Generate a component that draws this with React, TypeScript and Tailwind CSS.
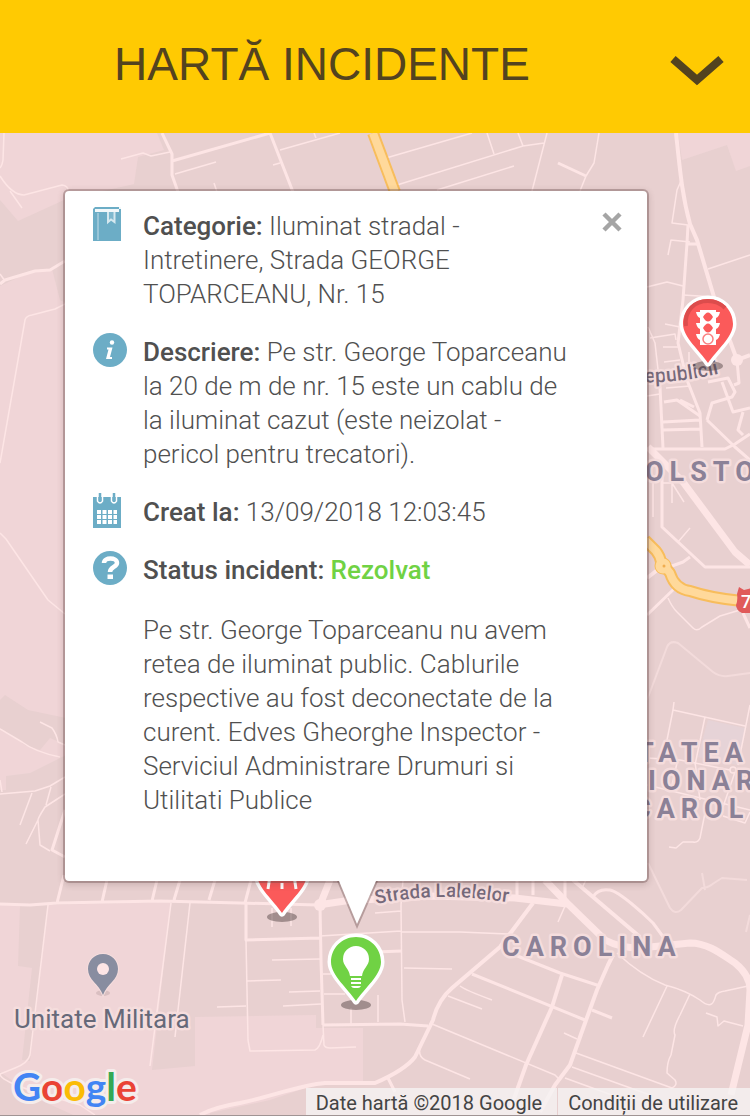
import React, { type ReactNode } from "react";

type MarkerKind = "bulb" | "traffic" | "road";

const LIGHT_AREAS = [
  "M0 133H157L164 150L138 157L134 184L64 200L18 221L0 200Z",
  "M678 133L682 160L727 145L736 171L750 166V133Z",
  "M0 286L30 272L52 269L60 300L66 303V718L28 710L5 695L0 700Z",
  "M0 728L25 745L40 750L50 738L66 745V755L30 773L6 776V790H0Z",
  "M0 904L20 905L18 966L32 968L22 1060L30 1061L48 905L171 902L152 1070L195 1066V1017L316 1015V1028H363V1082L320 1083L270 1100L210 1113V1118H80L40 1100L0 1072Z",
];

const THIN_ROADS = [
  "M4 133L3 160Q2 166 0 168M0 176Q12 195 24 195L62 185Q68 186 68 190M10 191L22 208",
  "M121 159L143 153L151 156L170 152M175 174L216 162M280 150L340 133M314 133L316 138M273 165L280 163M214 183L217 192",
  "M386 158L472 133M397 185L523 146L544 143M437 190L514 166M487 133L494 154M518 133L523 146M547 133L532 191M599 133L594 163L586 176L580 191",
  "M681 181L677 190L672 223L688 225M668 255L671 240L690 242M708 269L750 255M647 287L667 282L683 286M683 295L715 297",
  "M648 327L655 343L660 387M650 338L675 334L676 340M665 324L680 327M663 347H680M664 362L680 360M689 352V362M647 396L660 394M666 388L690 386",
  "M653 480V517M662 483H672L684 502M672 483V503M690 528L678 542M668 598Q672 607 677 612L693 628Q697 632 702 627L720 616L740 610",
  "M674 702L673 710L667 740M673 710L745 726M705 717L695 765M750 705L738 765M647 758L680 760L730 770M735 772L723 807M677 763L672 785M695 762L700 800M647 785L750 810",
  "M705 813L700 838Q698 843 693 842H683L676 848L669 847M723 816L745 823L750 812",
  "M0 274L5 281M0 463L25 320Q26 316 32 315L55 309L65 304M0 533L6 539L48 600L65 614",
  "M0 729L22 742Q35 752 60 757M40 722L52 728Q57 735 58 742L65 745M0 794L35 791L50 786L65 777M51 787L46 805M65 794L45 807Q38 818 38 820L40 845L50 851M32 793L20 825M38 820L26 844M0 780L2 792",
  "M48 905L30 1055Q28 1063 15 1068L0 1074Q0 1080 30 1090L80 1105L95 1115M171 903L150 1066M190 903L175 1037",
  "M246 940L248 1040L250 1051L315 1050Q320 1048 323 1035M323 1025L324 1045Q325 1048 330 1048L356 1047M272 960L320 959M247 981L281 980M289 992L320 991M283 1006L321 1004M217 1007L246 1006",
  "M323 974H331M324 994H345M320 936L401 931M351 1008V1024M272 908V927M291 908V926M375 913L401 911M403 880L401 905L402 1000L405 1022M402 932H460L508 934M404 968L452 969M378 995V1022",
  "M460 986Q465 990 492 1000M448 996L482 1009M432 1024L555 1075L560 1080M564 1033L577 1039M576 1053L672 1088Q678 1085 675 1080L667 1073Q667 1062 671 1055L675 1035Q672 1030 680 1015L690 994",
  "M572 1067L650 1095M565 1078L620 1098M617 953Q640 975 665 985Q685 990 700 1000C712 1010 714 1002 716 995Q718 992 725 991L748 986M667 986L643 1037M706 1013L717 1017L718 1026L724 1021L743 1026",
  "M565 906L558 922M420 1048Q418 1056 425 1060L470 1079M586 880L582 888",
];

const STREETS = [
  "M162 133L172 154V175L178 192M172 161L270 133L293 192M558 163L586 176",
  "M688 225L687 243L683 300L678 343L687 380L700 413L702 447M687 244H698M660 387L663 448M647 449H725L735 444L750 434M663 422L700 420M663 430L700 429",
  "M707 420L735 447L750 460M707 420L712 403L732 397L735 392L728 378L708 382M722 382L733 412L750 408M737 360L739 383L734 385M743 412L738 430L743 435M664 402L677 400L700 416M680 400L694 407",
  "M662 470V527L705 567H750M690 557L683 562L672 566M647 615L675 588M743 613L750 628M0 284L5 280L35 271L50 270L65 261",
  "M65 810L52 850L65 857M0 904L30 905L57 903L160 901L240 903L318 905M57 903L64 875M102 902L107 880M152 901L157 880M174 900L180 880M209 900L215 880M245 903L251 880",
  "M246 903V940L320 938M320 905L321 960L323 1025M375 952L402 951M323 1025L400 1024L428 1026M472 974L585 1020M510 953L560 973L600 986M592 1010L612 1018M388 1078L395 1092",
  "M593 897Q598 888 610 890C620 892 645 915 653 923L664 938M517 880V895M533 880V895M565 880V900",
];

const MAIN_STREETS = [
  "M676 133C680 170 682 195 690 224L697 240L714 297L737 360L750 355",
  "M533 903L500 947L452 988Q438 1000 433 1020L415 1057Q405 1070 375 1083H325C300 1085 270 1097 240 1103Q215 1107 200 1115",
  "M562 975L552 1007L526 1065L510 1110M613 955L608 965L597 990L585 1023L570 1065L555 1085L540 1112M573 880L640 937M647 578L660 568",
];

const AVENUES = [
  "M648 447L683 482L735 552L750 565M318 905L345 901L430 896L515 898L567 904M320 905L330 880",
  "M545 880L567 903L605 940Q620 948 640 948L690 943C710 943 725 957 735 963Q750 975 750 990L748 1025L731 1095",
];

const FAINT_ROADS = [
  "M647 700L667 647Q670 640 678 643L713 672Q720 677 728 676L750 673",
  "M648 863L670 908Q675 915 681 910L702 888Q708 888 714 883L722 878L747 880M702 873L705 890M750 915L746 932",
];

const HIGHWAYS = [
  "M373 133L395 192",
  "M645 540L656 551Q660 556 661 562L670 573Q675 589 690 591C705 596 720 599 742 601",
];

function Roads({ paths, width, color }: { paths: string[]; width: number; color: string }) {
  return (
    <g fill="none" stroke={color} strokeWidth={width} strokeLinejoin="round">
      {paths.map((d) => (
        <path key={d} d={d} />
      ))}
    </g>
  );
}

function MapCanvas() {
  return (
    <svg
      className="absolute inset-0 h-full w-full"
      viewBox="0 133 750 982"
      preserveAspectRatio="xMinYMin slice"
      fontFamily="Roboto, sans-serif"
      aria-label="Hartă"
      role="img"
    >
      <rect y="133" width="750" height="985" fill="#e8d0d0" />
      {LIGHT_AREAS.map((d) => (
        <path key={d} d={d} fill="#f0d5d7" />
      ))}
      <path d="M708 720L745 728L738 765L698 757Z" fill="#e6d3d7" />
      <Roads paths={FAINT_ROADS} width={2} color="#f3dbdb" />
      <Roads paths={THIN_ROADS} width={1.5} color="#fde5e5" />
      <Roads paths={STREETS} width={3} color="#fde5e5" />
      <Roads paths={MAIN_STREETS} width={4} color="#fde5e5" />
      <Roads paths={AVENUES} width={7} color="#fde5e5" />
      <circle cx="320" cy="905" r="6" fill="#fde5e5" />
      <circle cx="737" cy="360" r="6" fill="#fde5e5" />
      <circle cx="733" cy="770" r="3" fill="#e8d0d0" stroke="#fde5e5" strokeWidth="1.5" />
      <Roads paths={HIGHWAYS} width={12} color="#f8bd5c" />
      <circle cx="663" cy="566" r="8.5" fill="#f8bd5c" />
      <circle cx="663" cy="566" r="7.5" fill="#ffd99b" />
      <Roads paths={HIGHWAYS} width={8} color="#ffd99b" />
      <circle cx="664" cy="566" r="1.5" fill="#f0ad50" />
      <path d="M739 587L744 590L752 588V613H742Q736 610 736 605Q738 600 737 594Z" fill="#e05a5a" />
      <text x="741" y="608" fontSize="18" fontWeight="500" fill="#fff">7</text>

      <g stroke="#f5dddd" strokeWidth="5" strokeLinejoin="round" paintOrder="stroke">
        <g fill="#8b8197" fontSize="27" fontWeight="700" className="tracking-[6px]">
          <text x="645" y="481">OLSTO</text>
          <text x="637" y="762">TATEA</text>
          <text x="648" y="790">IONAR</text>
          <text x="633" y="818">CAROL</text>
          <text x="502" y="956">CAROLINA</text>
        </g>
        <g fill="#75697a" fontSize="20">
          <path id="lalelelor" d="M376 904Q405 898 435 897Q470 896 520 904" fill="none" stroke="none" />
          <path id="republicii" d="M632 382Q675 385 730 371" fill="none" stroke="none" />
          <text fontWeight="500" fontSize="19">
            <textPath href="#lalelelor">Strada Lalelelor</textPath>
          </text>
          <text fontWeight="500">
            <textPath href="#republicii">Republicii</textPath>
          </text>
        </g>
        <text x="14" y="1028" fill="#666979" fontSize="26">Unitate Militara</text>
      </g>

      <ellipse cx="103" cy="993" rx="7" ry="3" fill="#d9bfc1" />
      <path
        d="M103 954C94 954 88 961 88 969C88 980 99 984 103 995C107 984 118 980 118 969C118 961 112 954 103 954Z"
        fill="#888da0"
        stroke="#f5dddd"
        strokeWidth="2"
        paintOrder="stroke"
      />
      <circle cx="103" cy="969" r="6" fill="#fde5e5" />
    </svg>
  );
}

function MarkerSymbol({ kind }: { kind: MarkerKind }) {
  if (kind === "bulb") {
    return (
      <g fill="#fff">
        <path d="M30 14A13 13 0 0 0 17 27C17 34 23 36 24 44H36C37 36 43 34 43 27A13 13 0 0 0 30 14Z" />
        <path d="M25 46H35V48H25ZM25 50H35V52H25ZM25 54H35Q34 56 32 56H28Q26 56 25 54Z" />
      </g>
    );
  }
  if (kind === "traffic") {
    return (
      <g>
        <path
          d="M22 16H38V18H42Q41 23 38 24V29H42Q41 34 38 35V40H42Q41 45 38 46V51H22V46Q19 45 18 40H22V35Q19 34 18 29H22V24Q19 23 18 18H22Z"
          fill="#fff"
        />
        <path d="M25 23Q30 14 35 23Q30 32 25 23ZM25 34Q30 25 35 34Q30 43 25 34Z" fill="#fb5a5a" />
        <circle cx="30" cy="45" r="5" fill="#fff" stroke="#fb8080" strokeWidth="1.500" />
      </g>
    );
  }
  return (
    <g stroke="#fff" strokeWidth="3">
      <path d="M20 18L16 45M30 16V24M30 28V34M30 39V45M40 18L44 45" />
    </g>
  );
}

function Marker({ kind, label, className }: { kind: MarkerKind; label: string; className: string }) {
  return (
    <button type="button" aria-label={label} className={`absolute ${className}`}>
      <svg width="60" height="80" viewBox="0 0 60 80">
        <ellipse cx="30" cy={kind === "traffic" ? 72 : 73} rx="15" ry="5" fill="#4b3c3c" fillOpacity="0.45" />
        <path
          d="M30 5C16 5 5 16 5 30C5 43 22 57 30 69C38 57 55 43 55 30C55 16 44 5 30 5Z"
          fill={kind === "bulb" ? "#70d244" : "#fb5a5a"}
          stroke="#fff"
          strokeWidth="7"
          strokeLinejoin="round"
          paintOrder="stroke"
        />
        {kind === "traffic" && (
          <path d="M8 32C6 16 17 7 30 7C38 7 43 10 47 14" fill="none" stroke="#dc4c4c" strokeWidth="4" />
        )}
        <MarkerSymbol kind={kind} />
      </svg>
    </button>
  );
}

const BookIcon = (
  <svg width="28" height="34" viewBox="0 0 28 34">
    <path d="M2 0H26V2H28V34H0V2Z" fill="#6cadc6" />
    <path d="M0 0H26V2H28V0ZM2 2H26V5H2Z" fill="#f2f8fa" />
    <path d="M5 6V33" stroke="#a7cedd" strokeWidth="1.500" />
    <path d="M15 5V15L18 12.500L21.500 15V5" fill="#7fb8ce" stroke="#d5e8ef" strokeWidth="2" />
  </svg>
);

const InfoIcon = (
  <svg width="34" height="34" viewBox="0 0 34 34">
    <circle cx="17" cy="17" r="17" fill="#6cadc6" />
    <circle cx="19" cy="9.500" r="2.200" fill="#fff" />
    <path d="M14 14.500H19.500L17 24H19V26H13L15.500 16.500H14Z" fill="#fff" />
  </svg>
);

const CalendarIcon = (
  <svg width="28" height="36" viewBox="0 0 28 36">
    <path d="M0 4H28V35H0Z" fill="#6cadc6" />
    <path d="M4.500 2V8Q7 12 9.500 8V2M18.500 2V8Q21 12 23.500 8V2" fill="none" stroke="#fff" strokeWidth="1.500" />
    <path d="M7 0V9M21 0V9" stroke="#6cadc6" strokeWidth="2.500" />
    <path
      d="M4 17H8V21H4ZM9.500 17H13.500V21H9.500ZM15 17H19V21H15ZM20.500 17H24V21H20.500ZM4 22H8V26H4ZM9.500 22H13.500V26H9.500ZM15 22H19V26H15ZM20.500 22H24V26H20.500ZM4 27H8V31H4ZM9.500 27H13.500V31H9.500ZM15 27H19V31H15ZM20.500 27H24V31H20.500Z"
      fill="#fff"
    />
  </svg>
);

const QuestionIcon = (
  <svg width="34" height="34" viewBox="0 0 34 34">
    <circle cx="17" cy="17" r="17" fill="#6cadc6" />
    <path d="M11 12C11 6 24 6 24 12C24 16 17 16 17 21" fill="none" stroke="#fff" strokeWidth="4.500" />
    <path d="M14.500 23.500H20V28H14.500Z" fill="#fff" />
  </svg>
);

function DetailRow({ icon, label, children }: { icon: ReactNode; label: string; children: ReactNode }) {
  return (
    <div className="flex items-start gap-4">
      <span className="flex w-[34px] shrink-0" aria-hidden="true">
        {icon}
      </span>
      <div className="pt-0.5">
        <strong className="font-medium">{label}:</strong> {children}
      </div>
    </div>
  );
}

function IncidentPopup() {
  return (
    <article className="relative z-10 mt-[58px] mr-[103px] mb-6 ml-[65px] rounded-[4px] bg-white pt-4 pr-[70px] pb-16 pl-7 font-[Roboto,sans-serif] text-[26px] leading-[34px] font-light text-[#505050] shadow-[0_0_0_2px_rgba(90,60,60,0.32),0_2px_6px_2px_rgba(90,60,60,0.2)]">
      <div className="flex flex-col gap-[22px]">
        <DetailRow icon={BookIcon} label="Categorie">
          Iluminat stradal - Intretinere, Strada GEORGE TOPARCEANU, Nr. 15
        </DetailRow>
        <DetailRow icon={InfoIcon} label="Descriere">
          Pe str. George Toparceanu la 20 de m de nr. 15 este un cablu de la iluminat cazut (este
          neizolat - pericol pentru trecatori).
        </DetailRow>
        <DetailRow icon={CalendarIcon} label="Creat la">
          13/09/2018 12:03:45
        </DetailRow>
        <DetailRow icon={QuestionIcon} label="Status incident">
          <span className="font-medium text-[#70d244]">Rezolvat</span>
          <p className="mt-[26px]">
            Pe str. George Toparceanu nu avem retea de iluminat public. Cablurile respective au fost
            deconectate de la curent. Edves Gheorghe Inspector - Serviciul Administrare Drumuri si
            Utilitati Publice
          </p>
        </DetailRow>
      </div>
      <button type="button" aria-label="Închide" className="absolute top-[15px] right-[19px] p-1.5">
        <svg width="20" height="20" viewBox="0 0 20 20" stroke="#a5a5a5" strokeWidth="4.500">
          <path d="M2 2L18 18M18 2L2 18" />
        </svg>
      </button>
      <svg className="absolute top-full left-[268px]" width="48" height="50" viewBox="0 0 48 50" aria-hidden="true">
        <path d="M4 0L24 48L45 0Z" fill="#5a3c3c" fillOpacity="0.35" />
        <path d="M6 0L24 43L43 0Z" fill="#fff" />
      </svg>
    </article>
  );
}

function GoogleLogo() {
  return (
    <a href="#google" aria-label="Google" className="ml-2.5">
      <svg width="140" height="56" viewBox="0 0 140 56">
        <text
          x="3"
          y="42"
          fontFamily="Lato, sans-serif"
          fontSize="39"
          fontWeight="700"
          stroke="#f5eceb"
          strokeWidth="6"
          strokeLinejoin="round"
          paintOrder="stroke"
        >
          <tspan fill="#4285f4">G</tspan>
          <tspan fill="#ea4335">o</tspan>
          <tspan fill="#fbbc05">o</tspan>
          <tspan fill="#4285f4">g</tspan>
          <tspan fill="#34a853">l</tspan>
          <tspan fill="#ea4335">e</tspan>
        </text>
      </svg>
    </a>
  );
}

export default function App() {
  return (
    <div className="flex min-h-screen flex-col bg-white pb-0.5">
      <header className="flex h-[133px] shrink-0 items-center bg-[#ffca02] text-[#53431f]">
        <h1 className="flex-1 pb-1.5 text-center font-['Liberation_Sans',sans-serif] text-[46px] leading-none">
          HARTĂ INCIDENTE
        </h1>
        <button type="button" aria-label="Deschide meniul" className="flex h-full w-[106px] items-center justify-center pt-2">
          <svg width="54" height="32" viewBox="0 0 54 32" fill="none" stroke="currentColor" strokeWidth="8">
            <path d="M3 4L27 25L51 4" />
          </svg>
        </button>
      </header>
      <main className="relative flex flex-1 flex-col justify-between overflow-hidden border-b border-[#a09494]">
        <MapCanvas />
        <Marker kind="traffic" label="Semaforizare" className="top-[161px] left-[678px]" />
        <Marker kind="road" label="Drumuri" className="top-[711px] left-[252px]" />
        <Marker kind="bulb" label="Iluminat stradal" className="top-[799px] left-[326px]" />
        <IncidentPopup />
        <footer className="relative flex items-end justify-between pt-36">
          <GoogleLogo />
          <div className="flex font-[Roboto,sans-serif] text-[20px] leading-6 text-[#444]">
            <span className="bg-[#f5f2f2]/80 pt-[3px] pr-[15px] pl-2.5">Date hartă ©2018 Google</span>
            <a href="#conditii" className="ml-px bg-[#f5f2f2]/80 pt-[3px] pr-3 pl-2.5">
              Condiții de utilizare
            </a>
          </div>
        </footer>
      </main>
    </div>
  );
}
